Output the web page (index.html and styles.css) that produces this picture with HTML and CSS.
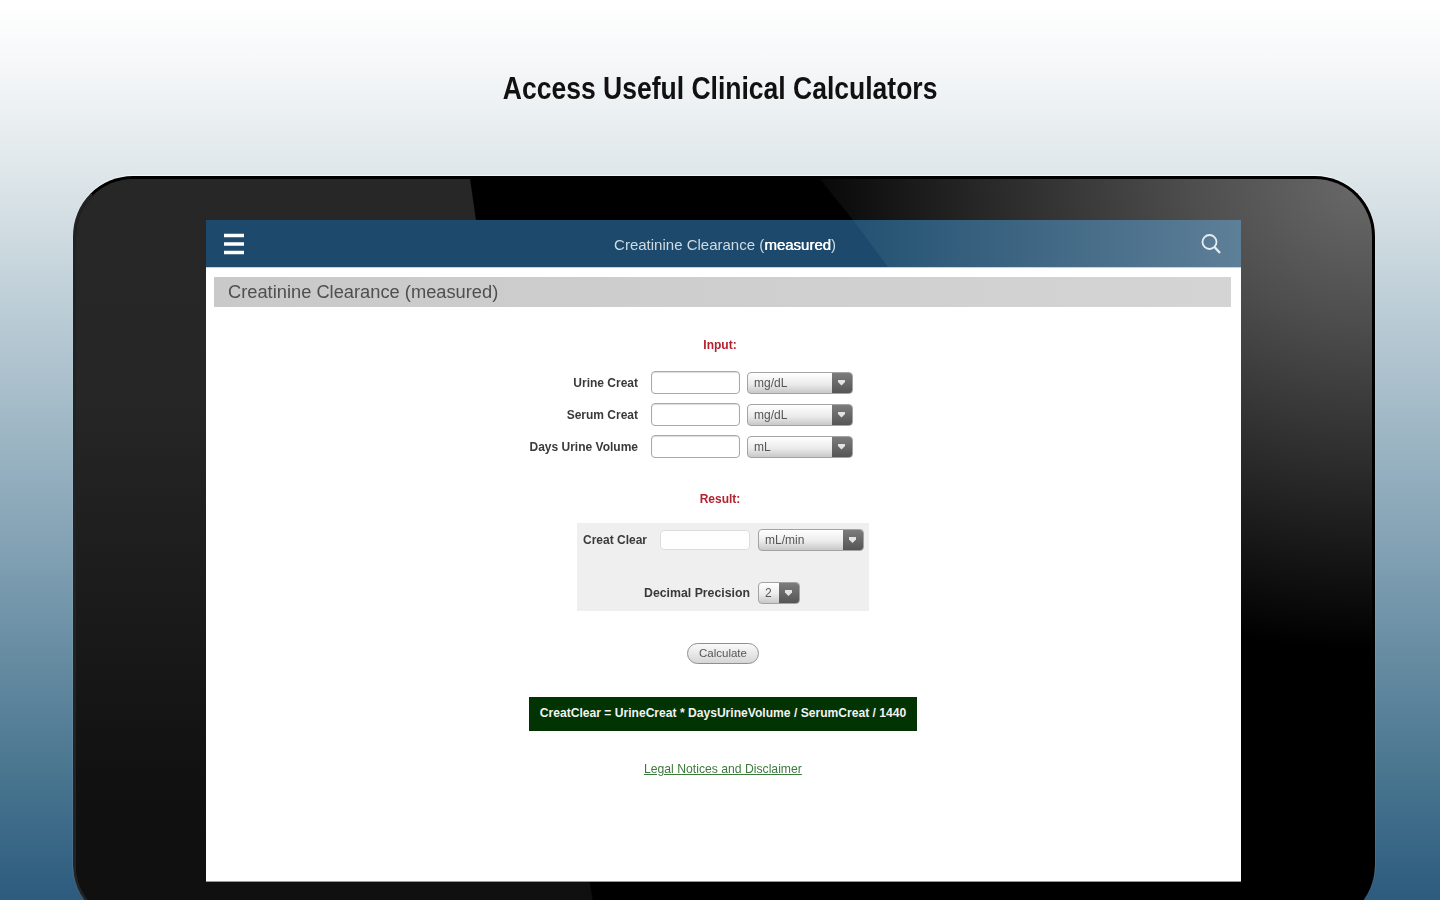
FILE: index.html
```html
<!DOCTYPE html>
<html lang="en">
<head>
<meta charset="utf-8">
<title>Access Useful Clinical Calculators</title>
<link rel="stylesheet" href="styles.css">
</head>
<body>
<h1 class="headline"><span class="headline-text">Access Useful Clinical Calculators</span></h1>
<div class="device">
  <main class="screen">
    <header class="appbar">
      <svg class="menu-icon" width="22" height="24" viewBox="0 0 22 24"><path d="M1 3.500h20M1 12h20M1 20.500h20" stroke="#fff" stroke-width="3.600"/></svg>
      <span class="appbar-title">Creatinine Clearance (<b>measured</b>)</span>
      <svg class="search-icon" width="24" height="24" viewBox="0 0 24 24" fill="none" stroke="#e6edf1"><circle cx="10.500" cy="10" r="7" stroke-width="1.800"/><path d="M15.500 15l5.500 6" stroke-width="2.400"/></svg>
    </header>
    <h2 class="page-title">Creatinine Clearance (measured)</h2>
    <h3 class="section-label input-label">Input:</h3>
    <div class="input-form">
      <label class="field-label">Urine Creat</label><input class="text-field"><div class="select"><span>mg/dL</span><i class="arrow"></i></div>
      <label class="field-label">Serum Creat</label><input class="text-field"><div class="select"><span>mg/dL</span><i class="arrow"></i></div>
      <label class="field-label">Days Urine Volume</label><input class="text-field"><div class="select"><span>mL</span><i class="arrow"></i></div>
    </div>
    <h3 class="section-label result-label">Result:</h3>
    <section class="result">
      <div class="result-row">
        <label class="field-label result-name">Creat Clear</label><input class="text-field result-field"><div class="select"><span>mL/min</span><i class="arrow"></i></div>
      </div>
      <div class="precision-row">
        <label class="field-label">Decimal Precision</label><div class="select select-small"><span>2</span><i class="arrow"></i></div>
      </div>
    </section>
    <button class="calc-button">Calculate</button>
    <div class="formula">CreatClear = UrineCreat * DaysUrineVolume / SerumCreat / 1440</div>
    <a class="legal" href="#">Legal Notices and Disclaimer</a>
  </main>
</div>
</body>
</html>
```
FILE: styles.css
```css
* { box-sizing: border-box; }
html, body { margin: 0; height: 100%; }
body {
  height: 900px;
  overflow: hidden;
  background: linear-gradient(180deg, #fff 0, #f6f8f9 60px, #dfe7ea 170px, #b9cbd5 320px, #7f9fb2 560px, #4a7690 770px, #2c5b7e 900px);
  font-family: "Liberation Sans", Arial, sans-serif;
}
.headline {
  margin: 0;
  height: 176px;
  padding-top: 71px;
  text-align: center;
  font: bold 31px/36px "Liberation Sans", sans-serif;
  color: #111;
}
.headline-text {
  display: inline-block;
  transform: scaleX(.855);
  filter: blur(.4px);
}
.device {
  position: relative;
  width: 1302px;
  height: 749px;
  margin-left: 73px;
  padding: 41px 131px 0 130px;
  border: 3px solid #000;
  border-left-color: #222;
  border-bottom-color: #222;
  border-radius: 60px;
  background: #000;
  box-shadow: 0 -1px 1px rgba(255,255,255,.7);
  overflow: hidden;
}
.device::before {
  content: "";
  position: absolute;
  inset: 0;
  background: linear-gradient(180deg, #272727 0, #262626 220px, #111 600px, #0f0f0f 100%);
  clip-path: polygon(0 0, 394px 0, 400px 41px, 521px 746px, 0 746px);
}
.device::after {
  content: "";
  position: absolute;
  inset: 0;
  background: radial-gradient(ellipse 600px 470px at 100% 0, #6a6a6a 0, #4e4e4e 30%, #2b2b2b 62%, #000 100%);
  clip-path: polygon(744px 0, 100% 0, 100% 100%, 1100px 100%, 777px 41px);
}
.screen {
  position: relative;
  z-index: 1;
  display: flex;
  flex-direction: column;
  width: 1035px;
  height: 661px;
  background: #fff;
  box-shadow: 0 1px 0 #999;
}
.appbar {
  position: relative;
  display: flex;
  align-items: center;
  flex: none;
  height: 48px;
  padding: 1px 18px 0 17px;
  background: #1d4a6c;
  border-bottom: 1px solid #c4d2dc;
}
.appbar::before {
  content: "";
  position: absolute;
  inset: 0;
  background: linear-gradient(90deg, #245272 647px, #5e7f98 100%);
  clip-path: polygon(647px 0, 100% 0, 100% 100%, 682px 100%);
}
.menu-icon { position: relative; flex: none; }
.appbar-title {
  position: relative;
  flex: 1;
  padding-left: 6px;
  text-align: center;
  font-size: 15px;
  color: #cfdbe3;
  filter: blur(.4px);
}
.appbar-title b { font-weight: normal; color: #fff; text-shadow: .5px 0 0 #fff; }
.search-icon { position: relative; flex: none; margin: 0 0 1px 0; }
.page-title {
  flex: none;
  height: 30px;
  margin: 9px 10px 0 8px;
  padding-left: 14px;
  background: linear-gradient(90deg, #c9c9c9, #d4d4d4);
  font: normal 18.300px/30px "Liberation Sans", sans-serif;
  color: #4f4f4f;
  filter: blur(.4px);
}
.section-label {
  margin: 0;
  font: bold 12px/16px "Liberation Sans", sans-serif;
  color: #b3222e;
  text-align: center;
  filter: blur(.6px);
  padding-right: 7px;
}
.input-label { margin-top: 30px; }
.input-form {
  display: grid;
  grid-template-columns: 110px 109px 106px;
  grid-auto-rows: 23px;
  align-items: center;
  row-gap: 9px;
  width: 325px;
  margin: 18px 0 0 322px;
}
.field-label {
  font: bold 12px/16px "Liberation Sans", sans-serif;
  color: #3a3a3a;
  text-align: right;
  white-space: nowrap;
  filter: blur(.6px);
}
.input-form .text-field { margin-left: 13px; }
.text-field {
  display: block;
  width: 89px;
  height: 23px;
  padding: 0;
  background: #fff;
  border: 1px solid #a8a8a8;
  border-radius: 4px;
  box-shadow: inset 0 1px 1px #ddd;
  filter: blur(.3px);
}
.select {
  display: flex;
  align-items: stretch;
  justify-content: space-between;
  width: 106px;
  height: 22px;
  border: 1px solid #a3a3a3;
  border-radius: 4px;
  background: linear-gradient(180deg, #fff, #ececec 55%, #c8c8c8);
  overflow: hidden;
  font: 12px/20px "Liberation Sans", sans-serif;
  color: #555;
  filter: blur(.3px);
}
.select span { padding-left: 6px; filter: blur(.3px); }
.arrow {
  position: relative;
  flex: none;
  width: 20px;
  background: linear-gradient(180deg, #7c7c7c, #555);
}
.arrow::after {
  content: "";
  position: absolute;
  left: 6px;
  top: 7px;
  width: 7px;
  height: 6px;
  background: #e4e4e4;
  clip-path: polygon(0 0, 100% 0, 100% 40%, 50% 100%, 0 40%);
}
.result-label { margin-top: 33px; }
.result {
  flex: none;
  display: flex;
  flex-direction: column;
  gap: 33px;
  width: 292px;
  height: 88px;
  margin: 16px 0 0 371px;
  padding: 7px 5px 0 6px;
  background: #efefef;
}
.result-row, .precision-row { display: flex; align-items: center; height: 20px; }
.result-name { width: 77px; text-align: left; }
.result-field { width: 90px; height: 20px; margin-right: 8px; border-color: #ddd; box-shadow: none; }
.precision-row { padding-left: 61px; gap: 8px; }
.precision-row .field-label { width: 106px; font-size: 12.300px; }
.select-small { width: 42px; }
.calc-button {
  flex: none;
  align-self: flex-start;
  width: 72px;
  height: 21px;
  margin: 32px 0 0 481px;
  padding: 0;
  border: 1px solid #8f8f8f;
  border-radius: 11px;
  background: linear-gradient(180deg, #fafafa, #d6d6d6);
  font: 11.500px/19px "Liberation Sans", sans-serif;
  color: #555;
  filter: blur(.4px);
}
.formula {
  flex: none;
  width: 388px;
  height: 34px;
  margin: 33px 0 0 323px;
  background: #023302;
  font: bold 12.100px/33px "Liberation Sans", sans-serif;
  color: #f2f2f2;
  text-align: center;
  white-space: nowrap;
}
.legal {
  align-self: flex-start;
  margin: 30px 0 0 438px;
  font: 12.200px/16px "Liberation Sans", sans-serif;
  color: #3c7a3c;
  filter: blur(.4px);
}
```
